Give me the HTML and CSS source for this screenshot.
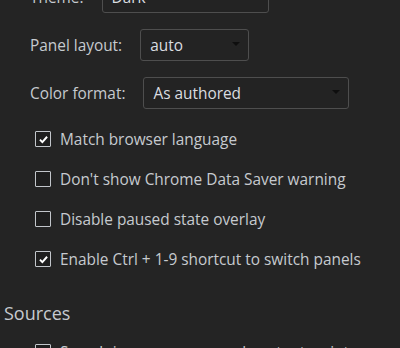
FILE: index.html
```html
<!DOCTYPE html>
<html>
<head>
<meta charset="utf-8">
<link rel="stylesheet" href="styles.css">
</head>
<body>
<div class="settings">
  <div class="select-row">
    <span class="label">Theme:</span>
    <div class="select theme"><span>Dark</span><span class="arrow"></span></div>
  </div>
  <div class="select-row">
    <span class="label">Panel layout:</span>
    <div class="select panel"><span>auto</span><span class="arrow"></span></div>
  </div>
  <div class="select-row">
    <span class="label">Color format:</span>
    <div class="select color"><span>As authored</span><span class="arrow"></span></div>
  </div>
  <div class="checks">
    <label class="check-row"><span class="box checked"><svg viewBox="0 0 16 16" width="16" height="16"><path d="M3.6 8.2 L6.6 11.2 L12.4 4.6" fill="none" stroke="#ffffff" stroke-width="2.4"/></svg></span><span>Match browser language</span></label>
    <label class="check-row"><span class="box"></span><span>Don't show Chrome Data Saver warning</span></label>
    <label class="check-row"><span class="box"></span><span>Disable paused state overlay</span></label>
    <label class="check-row"><span class="box checked"><svg viewBox="0 0 16 16" width="16" height="16"><path d="M3.6 8.2 L6.6 11.2 L12.4 4.6" fill="none" stroke="#ffffff" stroke-width="2.4"/></svg></span><span>Enable Ctrl + 1-9 shortcut to switch panels</span></label>
  </div>
  <h2 class="section">Sources</h2>
  <div class="checks">
    <label class="check-row"><span class="box"></span><span>Search in anonymous and content scripts</span></label>
  </div>
</div>
</body>
</html>
```
FILE: styles.css
```css
html, body {
  margin: 0;
  padding: 0;
  background: #242424;
  overflow: hidden;
}
body {
  font-family: "Open Sans", "Noto Sans", sans-serif;
  font-size: 15.4px;
  color: #c6cacf;
}
.settings {
  margin-top: -19px;
}
.select-row {
  display: flex;
  align-items: center;
  gap: 18px;
  height: 32px;
  margin-bottom: 16px;
  padding-left: 30px;
}
.select {
  box-sizing: border-box;
  height: 32px;
  border: 1px solid #4e4e4e;
  border-radius: 3px;
  background: #232323;
  display: flex;
  align-items: center;
  justify-content: space-between;
  padding: 0 8px 0 9px;
  color: #dadde0;
}
.theme { width: 167px; }
.panel { width: 109px; }
.color { width: 206px; }
.arrow {
  width: 0;
  height: 0;
  border-left: 4px solid transparent;
  border-right: 4px solid transparent;
  border-top: 4px solid #0e0e0e;
  margin-top: -2px;
}
.checks {
  display: flex;
  flex-direction: column;
  padding-left: 35px;
}
.check-row {
  display: flex;
  align-items: center;
  gap: 9px;
  height: 40px;
}
.select-row + .checks {
  margin-top: -6px;
}
.box {
  box-sizing: border-box;
  width: 16px;
  height: 16px;
  border: 1.5px solid #c2c6cb;
  border-radius: 1px;
  background: #1e1e1e;
  display: flex;
  align-items: center;
  justify-content: center;
  flex: none;
}
.box svg {
  width: 13px;
  height: 13px;
}
.section {
  font-size: 18px;
  font-weight: normal;
  margin: 21px 0 6px 4px;
  color: #c6cacf;
  line-height: 26px;
}
```
